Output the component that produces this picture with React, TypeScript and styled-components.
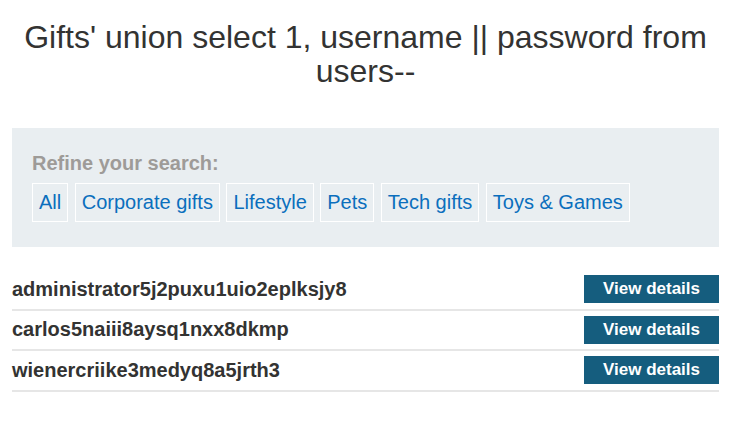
import styled, { createGlobalStyle } from "styled-components";

const users = [
  "administrator5j2puxu1uio2eplksjy8",
  "carlos5naiii8aysq1nxx8dkmp",
  "wienercriike3medyq8a5jrth3",
];

const categories = [
  "All",
  "Corporate gifts",
  "Lifestyle",
  "Pets",
  "Tech gifts",
  "Toys & Games",
];

const App = () => {
  return (
    <>
      <GlobalStyle />
      <Wrapper>
        <Title>Gifts' union select 1, username || password from users--</Title>
        <FilterPanel>
          <FilterLabel>Refine your search:</FilterLabel>
          <FilterList>
            {categories.map((cat) => (
              <FilterLink key={cat} href="#">
                {cat}
              </FilterLink>
            ))}
          </FilterList>
        </FilterPanel>
        <Results>
          {users.map((user) => (
            <Row key={user}>
              <UserName>{user}</UserName>
              <DetailsBtn href="#">View details</DetailsBtn>
            </Row>
          ))}
        </Results>
      </Wrapper>
    </>
  );
};

const GlobalStyle = createGlobalStyle`
  body {
    margin: 0;
    background: #ffffff;
    font-family: "Liberation Sans", Arial, sans-serif;
    color: #333332;
  }
`;

const Wrapper = styled.div`
  width: 707px;
  margin-left: 12px;
  display: flex;
  flex-direction: column;
`;

const Title = styled.h1`
  margin: 20px 0 0;
  padding: 0 10px;
  font-size: 32px;
  font-weight: 400;
  line-height: 34px;
  text-align: center;
  color: #333332;
`;

const FilterPanel = styled.section`
  margin-top: 40px;
  background: #e9eef1;
  padding: 24px 20px 25px;
  display: flex;
  flex-direction: column;
  gap: 8px;
`;

const FilterLabel = styled.div`
  font-size: 20px;
  font-weight: 700;
  line-height: 23px;
  color: #9e9b98;
`;

const FilterList = styled.div`
  display: flex;
  gap: 6.5px;
`;

const FilterLink = styled.a`
  display: block;
  border: 1px solid #ffffff;
  padding: 0 6px;
  font-size: 20px;
  line-height: 37px;
  color: #0b6fbd;
  text-decoration: none;
`;

const Results = styled.div`
  margin-top: 23px;
  display: flex;
  flex-direction: column;
`;

const Row = styled.div`
  height: 38.5px;
  display: flex;
  align-items: center;
  justify-content: space-between;
  border-bottom: 2px solid #e6e6e6;
`;

const UserName = styled.span`
  font-size: 20px;
  font-weight: 700;
  color: #333332;
`;

const DetailsBtn = styled.a`
  width: 135px;
  height: 28px;
  display: flex;
  align-items: center;
  justify-content: center;
  background: #155d7e;
  color: #ffffff;
  font-size: 17px;
  font-weight: 700;
  text-decoration: none;
`;

export default App;
